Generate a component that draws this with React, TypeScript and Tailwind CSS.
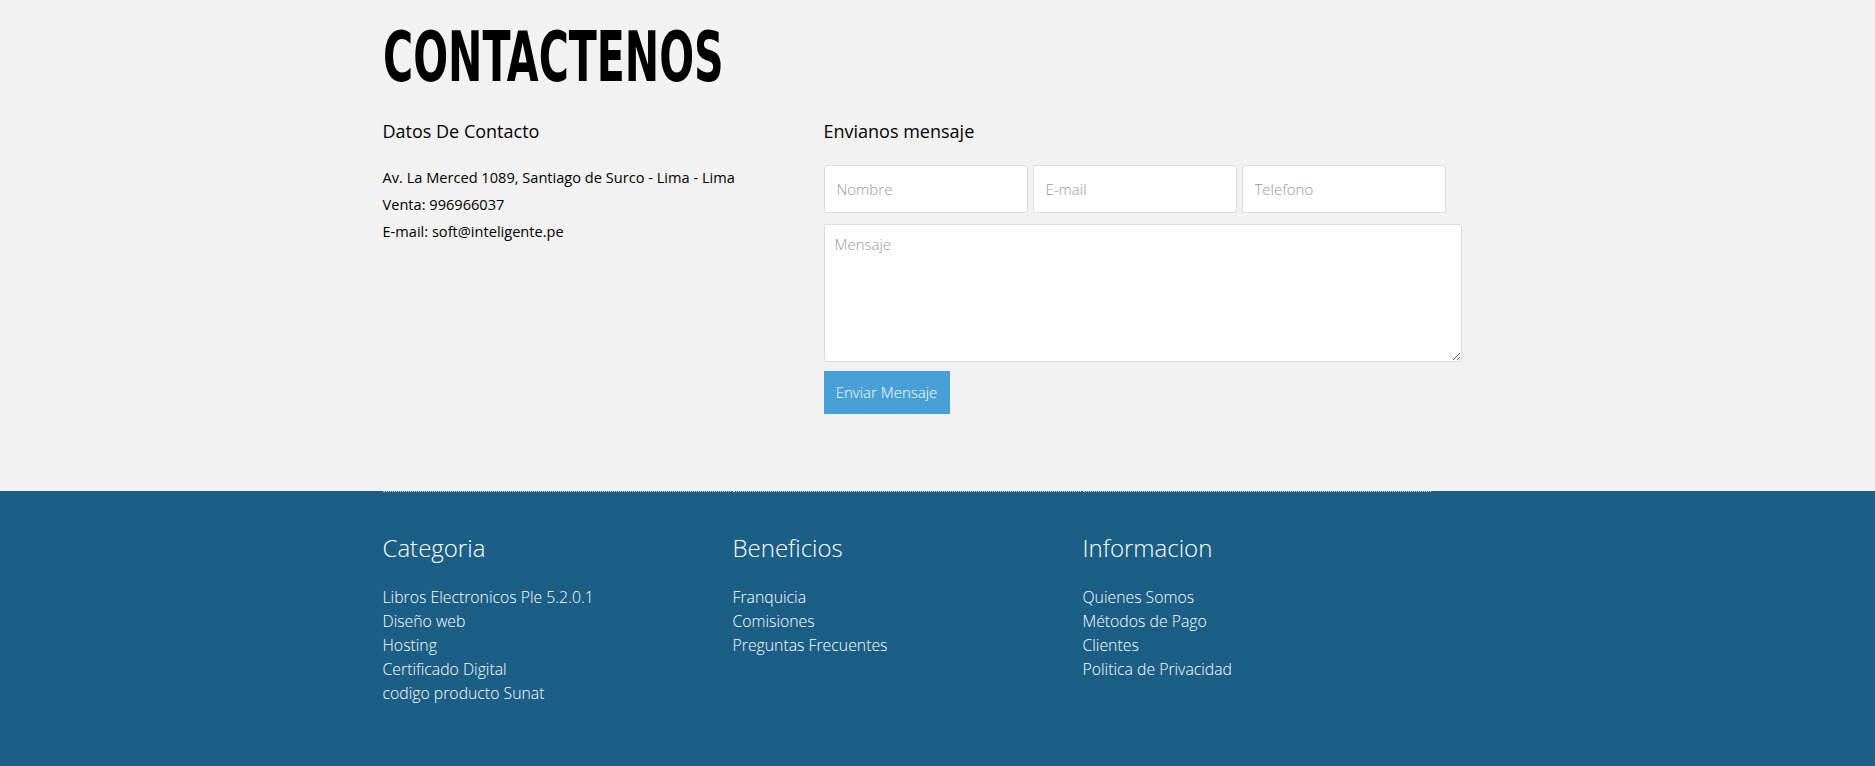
import React from "react";

const categoria = [
  "Libros Electronicos Ple 5.2.0.1",
  "Diseño web",
  "Hosting",
  "Certificado Digital",
  "codigo producto Sunat",
];
const beneficios = ["Franquicia", "Comisiones", "Preguntas Frecuentes"];
const informacion = ["Quienes Somos", "Métodos de Pago", "Clientes", "Politica de Privacidad"];

function FooterCol({ title, links }: { title: string; links: string[] }) {
  return (
    <div className="mr-[2px] border-t border-dotted border-[#c9d6df] pt-[40px]">
      <h3 className="text-[24px] leading-[32px] font-light text-white">{title}</h3>
      <ul className="mt-[21px]">
        {links.map((l) => (
          <li key={l}>
            <a href="#" className="text-[15.8px] leading-[24px] font-light text-white">
              {l}
            </a>
          </li>
        ))}
      </ul>
    </div>
  );
}

export default function App() {
  return (
    <div className="min-h-[766px] bg-[#f2f2f2] font-['Open_Sans',sans-serif] text-black">
      <section className="mx-auto w-[1110px] pt-[22px] pb-[77px]">
        <h1 className="inline-block origin-left scale-x-[0.652] font-['Liberation_Sans_Narrow','DejaVu_Sans_Condensed',sans-serif] text-[70px] leading-[71px] font-bold">
          CONTACTENOS
        </h1>

        <div className="mt-[26px] flex">
          <div className="w-[441px] shrink-0">
            <h2 className="text-[18px] leading-[24px]">Datos De Contacto</h2>
            <div className="mt-[21px] text-[14.6px] leading-[27px]">
              <p>Av. La Merced 1089, Santiago de Surco - Lima - Lima</p>
              <p>Venta: 996966037</p>
              <p>E-mail: soft@inteligente.pe</p>
            </div>
          </div>

          <div className="w-[638px]">
            <h2 className="text-[18px] leading-[24px]">Envianos mensaje</h2>
            <form className="mt-[22px]" onSubmit={(e) => e.preventDefault()}>
              <div className="grid w-[622px] grid-cols-3 gap-[5px]">
                <input
                  placeholder="Nombre"
                  className="h-[48px] rounded-[3px] border border-[#dcdcdc] bg-white px-[12px] text-[15px] font-light placeholder:text-[#9a9a9a] outline-none"
                />
                <input
                  placeholder="E-mail"
                  className="h-[48px] rounded-[3px] border border-[#dcdcdc] bg-white px-[12px] text-[15px] font-light placeholder:text-[#9a9a9a] outline-none"
                />
                <input
                  placeholder="Telefono"
                  className="h-[48px] rounded-[3px] border border-[#dcdcdc] bg-white px-[12px] text-[15px] font-light placeholder:text-[#9a9a9a] outline-none"
                />
              </div>
              <textarea
                placeholder="Mensaje"
                className="mt-[11px] block h-[138px] w-[638px] rounded-[3px] border border-[#dcdcdc] bg-white px-[10px] py-[8px] text-[15px] font-light placeholder:text-[#9a9a9a] outline-none"
              />
              <button
                type="submit"
                className="mt-[9px] h-[43px] w-[126px] bg-[#48a0d8] text-[15px] font-light text-white"
              >
                Enviar Mensaje
              </button>
            </form>
          </div>
        </div>
      </section>

      <footer className="h-[275px] bg-[#1b5e86]">
        <div className="mx-auto grid w-[1110px] grid-cols-[350px_350px_350px]">
          <FooterCol title="Categoria" links={categoria} />
          <FooterCol title="Beneficios" links={beneficios} />
          <FooterCol title="Informacion" links={informacion} />
        </div>
      </footer>
    </div>
  );
}
